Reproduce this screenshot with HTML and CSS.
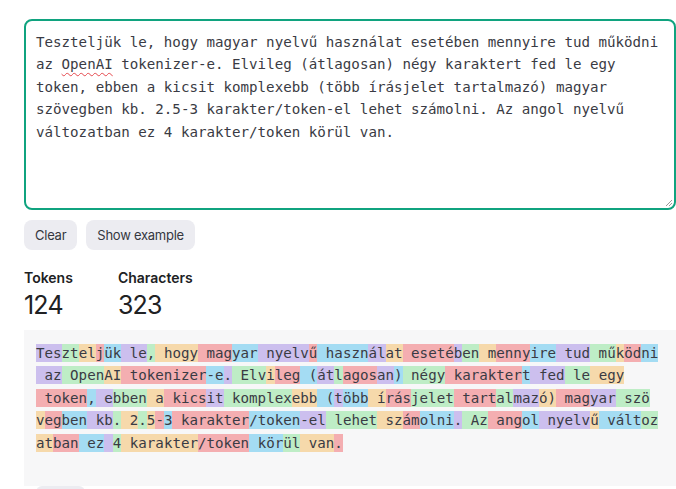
FILE: index.html
```html
<!DOCTYPE html>
<html lang="hu">
<head>
<meta charset="utf-8">
<title>Tokenizer</title>
<link rel="stylesheet" href="styles.css">
</head>
<body>
<main class="page">
  <div class="input-box" role="textbox" aria-multiline="true">Teszteljük le, hogy magyar nyelvű használat esetében mennyire tud működni az <span class="misspelled">OpenAI</span> tokenizer-e. Elvileg (átlagosan) négy karaktert fed le egy token, ebben a kicsit komplexebb (több írásjelet tartalmazó) magyar szövegben kb. 2.5-3 karakter/token-el lehet számolni. Az angol nyelvű változatban ez 4 karakter/token körül van.<svg class="resize" width="8" height="8" viewBox="0 0 8 8"><path d="M7 1 L1 7 M7 4 L4 7" stroke="#9a9a9a" stroke-width="1"/></svg></div>

  <div class="actions">
    <button class="btn">Clear</button>
    <button class="btn">Show example</button>
  </div>

  <div class="stats">
    <div class="stat">
      <div class="stat-label">Tokens</div>
      <div class="stat-value">124</div>
    </div>
    <div class="stat">
      <div class="stat-label">Characters</div>
      <div class="stat-value">323</div>
    </div>
  </div>

  <div class="output"><span class="t p">Tes</span><span class="t g">zt</span><span class="t o">el</span><span class="t r">j</span><span class="t b">ük</span><span class="t p"> le</span><span class="t g">,</span><span class="t o"> hogy</span><span class="t r"> mag</span><span class="t b">yar</span><span class="t p"> nyelv</span><span class="t r">ű</span><span class="t b"> haszn</span><span class="t p">ál</span><span class="t o">at</span><span class="t r"> eseté</span><span class="t p">b</span><span class="t g">en</span><span class="t o"> m</span><span class="t r">enny</span><span class="t b">ire</span><span class="t p"> tud</span><span class="t g"> mű</span><span class="t o">k</span><span class="t r">öd</span><span class="t b">ni</span>
<span class="t p"> az</span><span class="t g"> Open</span><span class="t o">AI</span><span class="t r"> tokenizer</span><span class="t b">-e</span><span class="t p">.</span><span class="t g"> Elv</span><span class="t o">i</span><span class="t r">leg</span><span class="t b"> (</span><span class="t p">át</span><span class="t g">l</span><span class="t r">agos</span><span class="t p">an</span><span class="t b">)</span><span class="t g"> négy</span><span class="t r"> karakter</span><span class="t b">t</span><span class="t p"> fed</span><span class="t g"> le</span><span class="t o"> egy</span>
<span class="t r"> token</span><span class="t b">,</span><span class="t p"> e</span><span class="t g">bben</span><span class="t o"> a</span><span class="t r"> kics</span><span class="t p">it</span><span class="t g"> komplex</span><span class="t o">ebb</span><span class="t b"> (</span><span class="t p">t</span><span class="t b">öbb</span><span class="t o"> í</span><span class="t r">rás</span><span class="t g">jelet</span><span class="t r"> tart</span><span class="t g">al</span><span class="t p">maz</span><span class="t o">ó)</span><span class="t r"> mag</span><span class="t p">yar</span><span class="t g"> szö</span>
<span class="t o">v</span><span class="t r">eg</span><span class="t b">ben</span><span class="t p"> kb</span><span class="t g">.</span><span class="t o"> 2</span><span class="t g">.</span><span class="t o">5</span><span class="t r">-</span><span class="t b">3</span><span class="t r"> karakter</span><span class="t b">/token</span><span class="t p">-el</span><span class="t g"> lehet</span><span class="t o"> sz</span><span class="t r">ám</span><span class="t b">olni</span><span class="t p">.</span><span class="t g"> Az</span><span class="t r"> ang</span><span class="t b">ol</span><span class="t p"> nyelv</span><span class="t o">ű</span><span class="t b"> vált</span><span class="t g">oz</span>
<span class="t o">at</span><span class="t r">ban</span><span class="t b"> ez</span><span class="t p"> </span><span class="t g">4</span><span class="t o"> karakter</span><span class="t r">/token</span><span class="t b"> kör</span><span class="t g">ül</span><span class="t o"> van</span><span class="t r">.</span></div>

  <div class="toggle"></div>
</main>
</body>
</html>
```

FILE: styles.css
```css
* {
  box-sizing: border-box;
}

html, body {
  margin: 0;
  padding: 0;
  background: #ffffff;
  overflow: hidden;
}

body {
  font-family: "Inter", "Noto Sans", sans-serif;
  color: #202123;
}

.page {
  padding: 19px 0 0 24px;
  width: 676px;
}

.input-box {
  position: relative;
  width: 652px;
  height: 191px;
  border: 2px solid #10a37f;
  border-radius: 8px;
  padding: 10px 10px;
  font-family: "DejaVu Sans Mono", "Liberation Mono", monospace;
  font-size: 14.17px;
  line-height: 22.4px;
  color: #3a3b44;
  white-space: pre-wrap;
  word-break: normal;
}

.misspelled {
  text-decoration: underline wavy #e5484d;
  text-decoration-thickness: 1px;
  text-underline-offset: 3px;
}

.resize {
  position: absolute;
  right: 1px;
  bottom: 1px;
}

.actions {
  display: flex;
  gap: 9px;
  margin-top: 10px;
}

.btn {
  height: 30px;
  padding: 0 11px;
  border: none;
  border-radius: 8px;
  background: #ececf1;
  color: #353740;
  font-family: "Inter", "Noto Sans", sans-serif;
  font-size: 13px;
  font-weight: 400;
  letter-spacing: -0.25px;
}

.stats {
  display: flex;
  gap: 45px;
  margin-top: 18px;
}

.stat-label {
  font-size: 14px;
  font-weight: 600;
  line-height: 20px;
  color: #202123;
}

.stat-value {
  margin-top: 2px;
  font-size: 25px;
  font-weight: 400;
  line-height: 30px;
  letter-spacing: -0.8px;
  color: #202123;
}

.output {
  margin-top: 10px;
  width: 652px;
  height: 156px;
  background: #f7f7f8;
  padding: 12px 12px;
  font-family: "DejaVu Sans Mono", "Liberation Mono", monospace;
  font-size: 14.17px;
  line-height: 22.4px;
  color: #3a3b44;
  white-space: pre;
}

.t {
  padding: 1px 0;
}

.p { background: rgba(107, 64, 216, 0.3); }
.g { background: rgba(104, 222, 122, 0.4); }
.o { background: rgba(244, 172, 54, 0.4); }
.r { background: rgba(239, 65, 70, 0.4); }
.b { background: rgba(39, 181, 234, 0.4); }

.toggle {
  margin-left: 12px;
  width: 49px;
  height: 30px;
  background: #ececf1;
  border-radius: 6px;
}
```
